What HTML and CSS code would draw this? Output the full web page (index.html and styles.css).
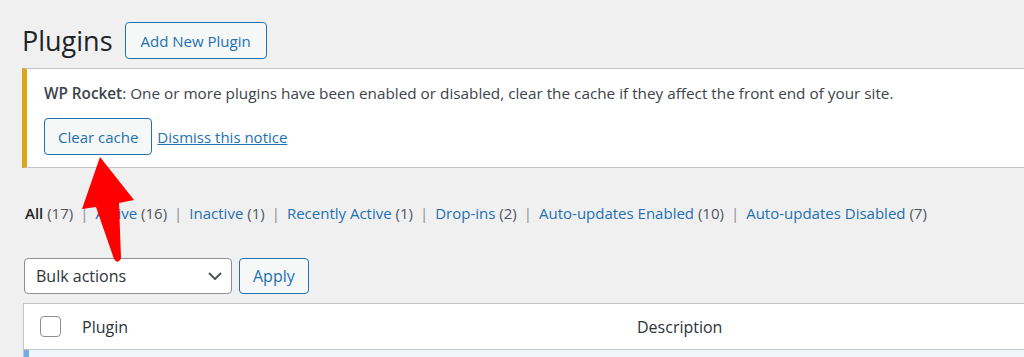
FILE: index.html
```html
<!DOCTYPE html>
<html lang="en">
<head>
    <meta charset="UTF-8">
    <meta name="viewport" content="width=device-width, initial-scale=1.0">
    <title>Plugins</title>
    <link rel="stylesheet" href="styles.css">
</head>
<body>

<div class="wrap">
    <div class="page-header">
        <h1>Plugins</h1>
        <a class="button" href="#">Add New Plugin</a>
    </div>

    <div class="notice">
        <p><strong>WP Rocket</strong>: One or more plugins have been enabled or disabled, clear the cache if they affect the front end of your site.</p>
        <div class="notice-actions">
            <a class="button" href="#">Clear cache</a>
            <a class="dismiss" href="#">Dismiss this notice</a>
        </div>
    </div>

    <ul class="subsubsub">
        <li><a class="current" href="#">All <span class="count">(17)</span></a><span class="sep">|</span></li>
        <li><a href="#">Active <span class="count">(16)</span></a><span class="sep">|</span></li>
        <li><a href="#">Inactive <span class="count">(1)</span></a><span class="sep">|</span></li>
        <li><a href="#">Recently Active <span class="count">(1)</span></a><span class="sep">|</span></li>
        <li><a href="#">Drop-ins <span class="count">(2)</span></a><span class="sep">|</span></li>
        <li><a href="#">Auto-updates Enabled <span class="count">(10)</span></a><span class="sep">|</span></li>
        <li><a href="#">Auto-updates Disabled <span class="count">(7)</span></a></li>
    </ul>

    <div class="tablenav">
        <div class="select">
            <span>Bulk actions</span>
            <svg width="14" height="8" viewBox="0 0 14 8"><path d="M1 1l6 6 6-6" fill="none" stroke="#50575e" stroke-width="2"/></svg>
        </div>
        <a class="button" href="#">Apply</a>
    </div>

    <div class="plugins-table">
        <div class="table-head">
            <span class="checkbox"></span>
            <span class="col-name">Plugin</span>
            <span class="col-desc">Description</span>
        </div>
        <div class="table-row"></div>
    </div>
</div>

<!-- red pointer drawn over the screenshot -->
<svg class="pointer" width="1024" height="357" viewBox="0 0 1024 357">
    <path d="M100 157 L134 200 L119 203 L121 258 Q118 265 114 259 L96 207 L82 209 Z" fill="#ff0000"/>
</svg>

</body>
</html>
```

FILE: styles.css
```css
body {
    margin: 0;
    background-color: #f0f0f1;
    color: #3c434a;
    font-family: "Open Sans", "Noto Sans", sans-serif;
    font-size: 15px;
    overflow: hidden;
    height: 357px;
    position: relative;
}
a {
    color: #2271b1;
}
.wrap {
    padding: 22px 0 0 22px;
}
.page-header {
    display: flex;
    align-items: center;
    gap: 12px;
}
h1 {
    margin: 0;
    font-size: 27px;
    font-weight: 400;
    color: #1d2327;
    line-height: 37px;
}
.button {
    display: inline-flex;
    align-items: center;
    box-sizing: border-box;
    height: 37px;
    padding: 0 13px;
    border: 1px solid #2271b1;
    border-radius: 4px;
    background-color: #f6f7f7;
    color: #2271b1;
    text-decoration: none;
    font-size: 15px;
}
.page-header .button {
    padding: 0 15px;
}
.notice {
    margin: 9px -10px 0 0;
    height: 100px;
    box-sizing: border-box;
    background-color: #fff;
    border: 1px solid #c3c4c7;
    border-left: 5px solid #dba617;
    padding: 13px 0 0 17px;
}
.notice p {
    margin: 0;
    line-height: 22px;
    font-size: 15.3px;
}
.notice strong {
    font-weight: 600;
}
.notice-actions {
    display: flex;
    align-items: center;
    gap: 5px;
    margin-top: 14px;
}
.dismiss {
    font-size: 15px;
}
.subsubsub {
    list-style: none;
    margin: 33px 0 0 3px;
    padding: 0;
    display: flex;
    line-height: 24px;
    font-size: 15px;
}
.subsubsub a {
    text-decoration: none;
}
.subsubsub a.current {
    color: #1d2327;
    font-weight: 600;
}
.count {
    color: #50575e;
    font-weight: 400;
}
.sep {
    color: #8c8f94;
    margin: 0 7px;
}
.tablenav {
    display: flex;
    gap: 7px;
    margin: 33px 0 0 2px;
}
.select {
    box-sizing: border-box;
    width: 208px;
    height: 36px;
    display: flex;
    align-items: center;
    justify-content: space-between;
    padding: 0 9px 0 11px;
    background-color: #fff;
    border: 1px solid #8c8f94;
    border-radius: 4px;
    color: #2c3338;
    font-size: 16px;
}
.tablenav .button {
    height: 36px;
    font-size: 16px;
}
.plugins-table {
    margin: 9px -10px 0 1px;
    border: 1px solid #c3c4c7;
    background-color: #fff;
}
.table-head {
    display: flex;
    align-items: center;
    height: 45px;
    border-bottom: 1px solid #c3c4c7;
    font-size: 16px;
    color: #2c3338;
}
.checkbox {
    box-sizing: border-box;
    width: 21px;
    height: 21px;
    margin-left: 16px;
    border: 1px solid #8c8f94;
    border-radius: 4px;
    background-color: #fff;
}
.col-name {
    margin-left: 21px;
    width: 555px;
}
.table-row {
    height: 20px;
    background-color: #f0f6fc;
    border-left: 5px solid #72aee6;
}
.pointer {
    position: absolute;
    left: 0;
    top: 0;
}
```
